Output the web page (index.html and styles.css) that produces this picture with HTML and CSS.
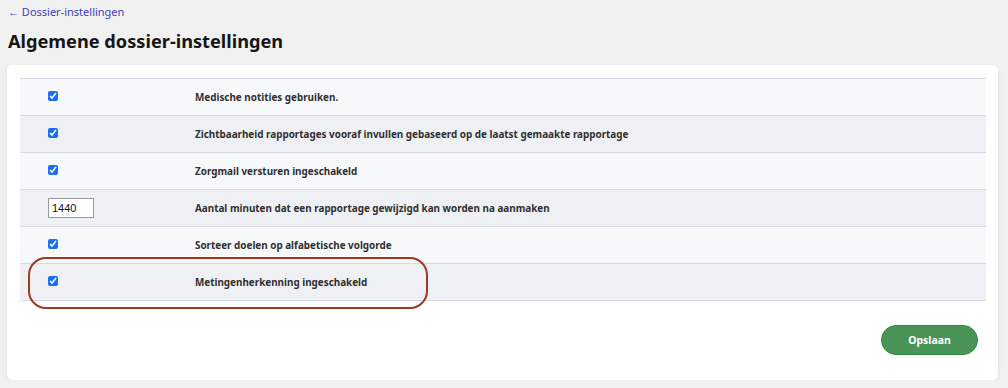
FILE: index.html
```html
<!DOCTYPE html>
<html lang="nl">
<head>
    <meta charset="UTF-8">
    <meta name="viewport" content="width=device-width, initial-scale=1.0">
    <title>Algemene dossier-instellingen</title>
    <link rel="stylesheet" href="styles.css">
</head>
<body>
    <a class="back-link" href="#">&larr; Dossier-instellingen</a>
    <h1>Algemene dossier-instellingen</h1>

    <div class="card">
        <div class="settings">
            <div class="setting-row">
                <div class="control"><input type="checkbox" checked></div>
                <div class="label">Medische notities gebruiken.</div>
            </div>
            <div class="setting-row">
                <div class="control"><input type="checkbox" checked></div>
                <div class="label">Zichtbaarheid rapportages vooraf invullen gebaseerd op de laatst gemaakte rapportage</div>
            </div>
            <div class="setting-row">
                <div class="control"><input type="checkbox" checked></div>
                <div class="label">Zorgmail versturen ingeschakeld</div>
            </div>
            <div class="setting-row">
                <div class="control"><input class="number" type="text" value="1440"></div>
                <div class="label">Aantal minuten dat een rapportage gewijzigd kan worden na aanmaken</div>
            </div>
            <div class="setting-row">
                <div class="control"><input type="checkbox" checked></div>
                <div class="label">Sorteer doelen op alfabetische volgorde</div>
            </div>
            <div class="setting-row highlighted">
                <div class="control"><input type="checkbox" checked></div>
                <div class="label">Metingenherkenning ingeschakeld</div>
                <span class="annotation"></span>
            </div>
        </div>

        <div class="actions">
            <button class="save">Opslaan</button>
        </div>
    </div>
</body>
</html>
```

FILE: styles.css
```css
/* General Styling */
body {
    font-family: 'Noto Sans', sans-serif;
    margin: 0;
    padding: 0 10px 0 7px;
    background: #f1f1f1;
    color: #333333;
}
.back-link {
    display: block;
    padding: 5px 0 0 1px;
    font-size: 11px;
    line-height: 14px;
    color: #3b40b8;
    text-decoration: none;
}
h1 {
    margin: 10px 0 12px 1px;
    font-size: 18.2px;
    line-height: 24px;
    font-weight: 700;
    color: #161616;
}
.card {
    background: #ffffff;
    border-radius: 5px;
    box-shadow: 0 1px 4px rgba(0, 0, 0, 0.08);
    padding: 13px 12px 25px 13px;
}
.settings {
    border-top: 1px solid #d6d9e6;
}
.setting-row {
    position: relative;
    display: grid;
    grid-template-columns: 175px 1fr;
    align-items: center;
    height: 36px;
    border-bottom: 1px solid #d6d9e6;
    background: #f7f8fa;
}
.setting-row:nth-child(even) {
    background: #eff0f4;
}
.control {
    padding-left: 28px;
    display: flex;
    align-items: center;
}
.control input[type="checkbox"] {
    width: 10px;
    height: 10px;
    margin: 0 0 2px 0;
    accent-color: #1a6ff0;
}
.control input.number {
    width: 38px;
    height: 14px;
    padding: 2px 3px;
    margin: 0;
    border: 1px solid #9a9a9a;
    border-radius: 0;
    font-family: 'Liberation Sans', sans-serif;
    font-size: 11px;
    color: #111111;
    background: #ffffff;
}
.label {
    font-size: 9.9px;
    font-weight: 700;
    color: #303030;
    padding-bottom: 1px;
}
.annotation {
    position: absolute;
    left: 8px;
    top: -7px;
    width: 396px;
    height: 48px;
    border: 2.5px solid #9b3a1e;
    border-radius: 18px;
    pointer-events: none;
}
.actions {
    display: flex;
    justify-content: flex-end;
    padding-top: 24px;
    padding-right: 8px;
}
button.save {
    width: 97px;
    height: 30px;
    border: 1px solid #2f8a3f;
    border-radius: 15px;
    background-color: #4a9458;
    color: #ffffff;
    font-family: 'Noto Sans', sans-serif;
    font-size: 10.5px;
    font-weight: 700;
    cursor: pointer;
}
```
